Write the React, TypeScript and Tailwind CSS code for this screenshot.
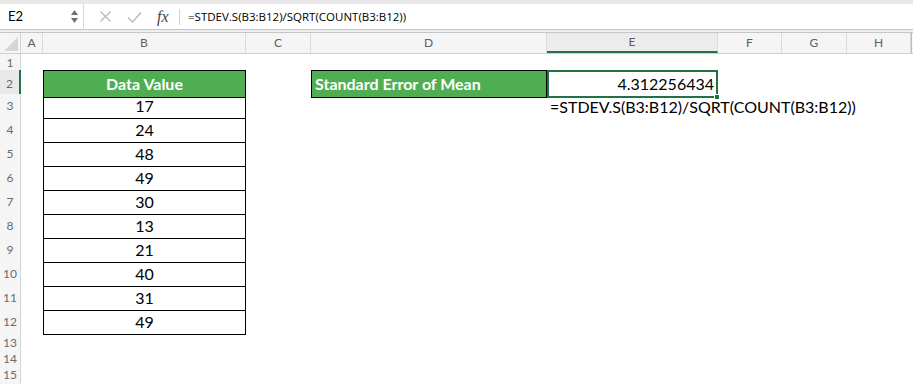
import React from "react";

const cols = "grid-cols-[21px_22px_203px_65px_236px_171px_64px_65px_64px_1fr]";
const values = [17, 24, 48, 49, 30, 13, 21, 40, 31, 49];
const letters = ["A", "B", "C", "D", "E", "F", "G", "H"];

function RowHead({ n, active }: { n: number; active?: boolean }) {
  return (
    <div
      className={`flex items-center justify-center border-b border-[#e2e2e2] text-[12px] text-[#6b6b6b] ${
        active ? "bg-[#e9e9e9] border-r-2 border-r-[#217346]" : "bg-[#f5f5f5] border-r border-r-[#d4d4d4]"
      }`}
    >
      {n}
    </div>
  );
}

export default function App() {
  return (
    <div className="w-[913px] h-[384px] overflow-hidden bg-white font-['Lato','Liberation_Sans',sans-serif]">
      {/* formula bar */}
      <div className="h-[4px] bg-[#e8e8e8]" />
      <div className="flex h-[26px] items-center border-b border-[#c6c6c6] bg-white text-[13px] text-black">
        <div className="flex w-[83px] items-center justify-between pl-[8px] pr-[5px]">
          <span>E2</span>
          <div className="flex flex-col items-center gap-[3px] text-[#707070]">
            <svg width="7" height="5" viewBox="0 0 7 5"><path d="M0 5 L3.5 0 L7 5 Z" fill="currentColor" /></svg>
            <svg width="7" height="5" viewBox="0 0 7 5"><path d="M0 0 L3.5 5 L7 0 Z" fill="currentColor" /></svg>
          </div>
        </div>
        <div className="h-[26px] w-px bg-[#d8d8d8]" />
        <div className="flex w-[95px] items-center gap-[15px] pl-[15px] text-[#b9b9b9]">
          <svg width="13" height="13" viewBox="0 0 13 13"><path d="M1.5 1.5 L11.5 11.5 M11.5 1.5 L1.5 11.5" stroke="currentColor" strokeWidth="1.4" /></svg>
          <svg width="15" height="12" viewBox="0 0 15 12"><path d="M1 6.5 L5.5 11 L14 1.5" stroke="currentColor" strokeWidth="1.4" fill="none" /></svg>
          <span className="font-['Liberation_Serif',serif] text-[16px] italic text-[#444]">fx</span>
        </div>
        <div className="h-[16px] w-px bg-[#d0d0d0]" />
        <span className="pl-[8px] font-['Open_Sans',sans-serif] text-[11.5px]">=STDEV.S(B3:B12)/SQRT(COUNT(B3:B12))</span>
      </div>
      <div className="h-[3px] border-b border-[#c6c6c6] bg-[#f0f0f0]" />

      {/* column headers */}
      <div className={`grid h-[21px] ${cols} border-b border-[#cfcfcf] bg-[#f5f5f5] text-[12px] text-[#5f5f5f]`}>
        <div className="flex items-end justify-end border-r border-[#d4d4d4] p-[2px]">
          <svg width="14" height="14" viewBox="0 0 14 14"><path d="M14 0 L14 14 L0 14 Z" fill="#d6d6d6" /></svg>
        </div>
        {letters.map((l) => (
          <div
            key={l}
            className={`flex items-center justify-center border-r border-[#dadada] ${
              l === "E" ? "bg-[#ececec] border-b-2 border-b-[#217346]" : ""
            }`}
          >
            {l}
          </div>
        ))}
        <div className="border-l border-[#bdbdbd]" />
      </div>

      {/* row 1 */}
      <div className={`grid h-[16px] ${cols}`}>
        <RowHead n={1} />
      </div>

      {/* row 2 */}
      <div className={`grid h-[24px] ${cols} text-[16px]`}>
        <RowHead n={2} active />
        <div />
        <div className="flex items-center justify-center border border-black bg-[#4fae52] font-bold text-white">
          Data Value
        </div>
        <div />
        <div className="flex items-center border border-black bg-[#4fae52] pl-[3px] font-bold text-white">
          Standard Error of Mean
        </div>
        <div className="relative flex items-center justify-end border-2 border-[#217346] pr-[2px] text-black">
          4.312256434
          <div className="absolute -bottom-[4px] -right-[4px] h-[6px] w-[6px] border border-white bg-[#217346]" />
        </div>
      </div>

      {/* rows 3-12 */}
      {values.map((v, i) => (
        <div key={i} className={`grid h-[24px] ${cols} text-[16px] text-black`}>
          <RowHead n={i + 3} />
          <div />
          <div className="flex items-center justify-center border-x border-b border-black">{v}</div>
          <div />
          <div />
          {i === 0 ? (
            <div className="flex items-center whitespace-nowrap pl-[3px]">=STDEV.S(B3:B12)/SQRT(COUNT(B3:B12))</div>
          ) : (
            <div />
          )}
        </div>
      ))}

      {/* rows 13-15 */}
      {[13, 14, 15].map((n) => (
        <div key={n} className={`grid h-[16px] ${cols}`}>
          <RowHead n={n} />
        </div>
      ))}
    </div>
  );
}
